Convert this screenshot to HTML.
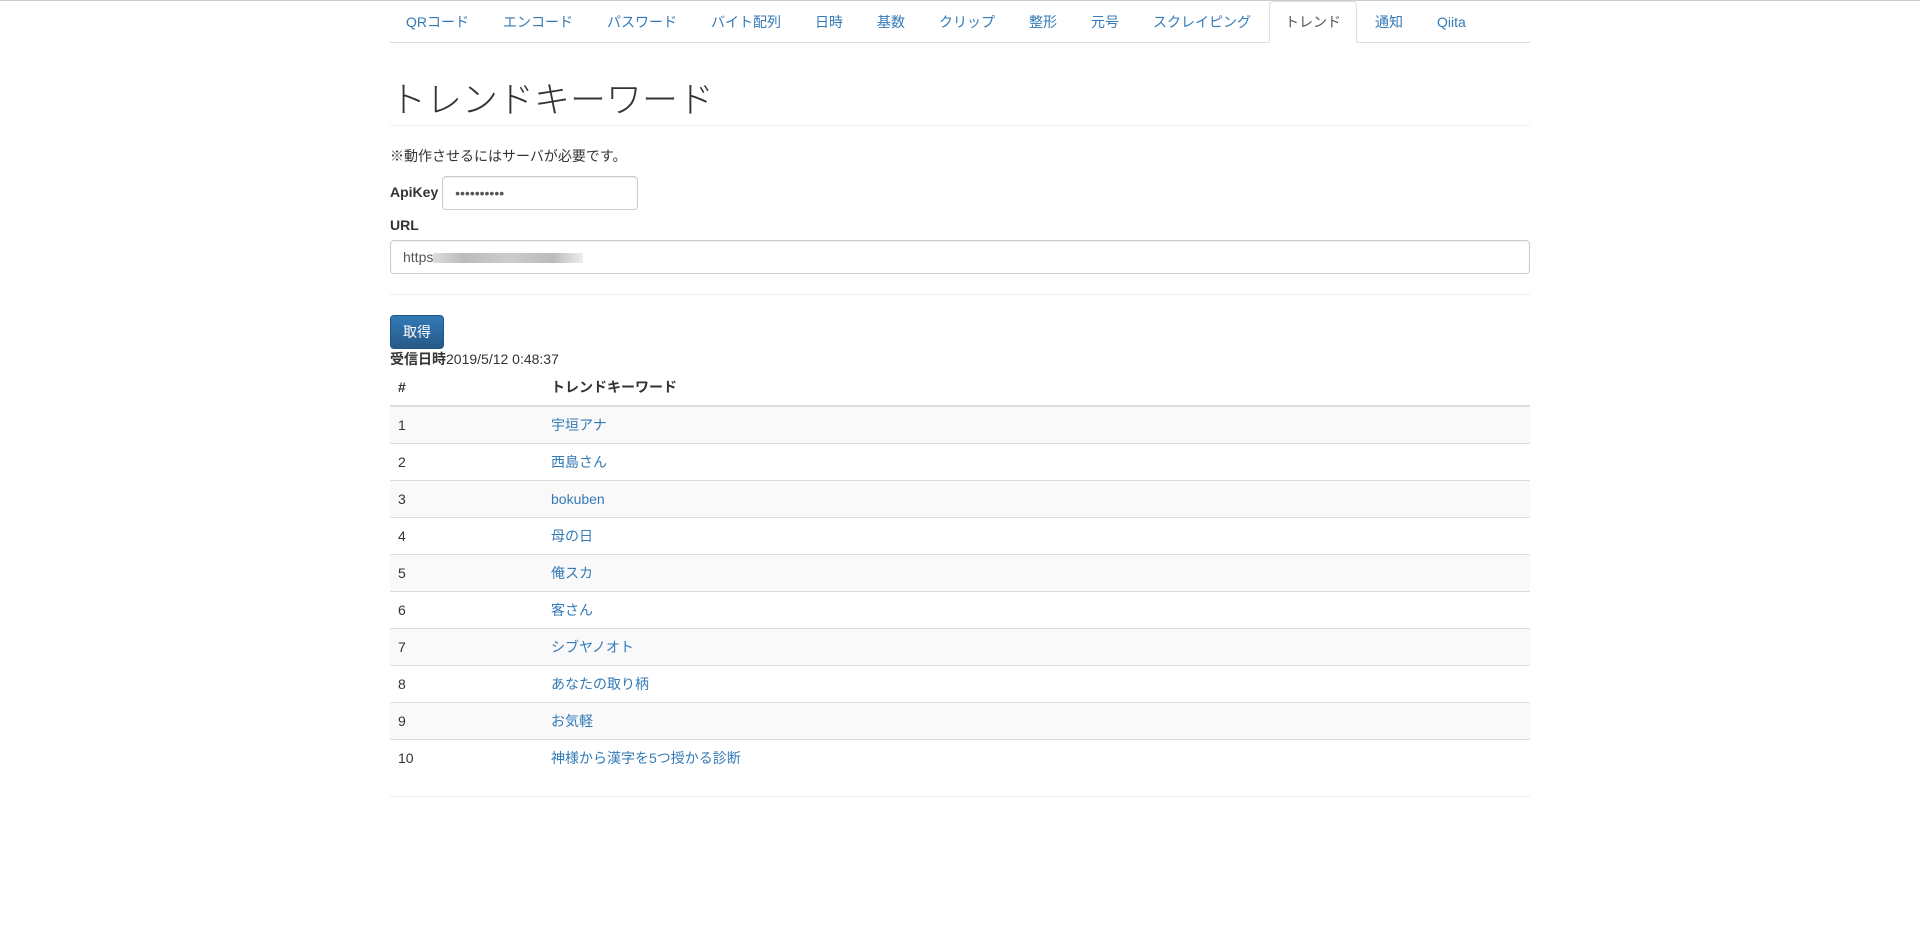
<!DOCTYPE html>
<html><head><meta charset="utf-8"><style>
*{box-sizing:border-box}
body{margin:0;font-family:"Liberation Sans","Noto Sans CJK JP",sans-serif;font-size:14px;line-height:20px;color:#333;background:#fff;border-top:1px solid #ccc}
.c{width:1140px;margin:0 auto}
.tabs{display:flex;border-bottom:1px solid #ddd;height:42px;margin:0;padding:0;list-style:none}
.tabs li{margin-bottom:-1px}
.tabs a{display:block;padding:10px 15px;margin-right:2px;color:#337ab7;text-decoration:none;border:1px solid transparent;border-radius:4px 4px 0 0;line-height:20px}
.tabs li.act a{color:#555;background:#fff;border-color:#ddd #ddd transparent}
.ph{margin:37px 0 20px;padding-bottom:5px;border-bottom:1px solid #eee}
h1{font-size:36px;font-weight:300;line-height:40px;margin:20px 0 0}
p{margin:0 0 10px}
label{font-weight:bold;display:inline-block;margin-bottom:5px}
.in{height:34px;border:1px solid #ccc;border-radius:4px;padding:6px 12px;box-shadow:inset 0 1px 1px rgba(0,0,0,.075);background:#fff;color:#555;font-size:14px}
hr{border:0;border-top:1px solid #eee;margin:20px 0}
.btn{display:inline-block;height:34px;padding:6px 12px;color:#fff;border-radius:4px;background:linear-gradient(#337ab7,#265a88);border:1px solid #245580}
table{width:100%;border-collapse:collapse;margin-bottom:20px}
th,td{padding:8px;text-align:left;line-height:20px;border-top:1px solid #ddd}
th{border-top:0;border-bottom:2px solid #ddd}
tbody tr:nth-child(odd){background:#f9f9f9}
td a{color:#337ab7;text-decoration:none}
.blur{display:inline-block;width:150px;height:10px;background:linear-gradient(90deg,#ddd,#bbb 20%,#ccc 50%,#bbb 80%,#eee);vertical-align:middle}
</style></head><body><div class="c">
<ul class="tabs">
<li><a>QRコード</a></li><li><a>エンコード</a></li><li><a>パスワード</a></li><li><a>バイト配列</a></li><li><a>日時</a></li><li><a>基数</a></li><li><a>クリップ</a></li><li><a>整形</a></li><li><a>元号</a></li><li><a>スクレイピング</a></li><li class="act"><a>トレンド</a></li><li><a>通知</a></li><li><a>Qiita</a></li>
</ul>
<div class="ph"><h1>トレンドキーワード</h1></div>
<p>※動作させるにはサーバが必要です。</p>
<div style="margin-bottom:5px"><label>ApiKey</label> <div class="in" style="display:inline-block;width:196px;vertical-align:middle">••••••••••</div></div>
<label>URL</label>
<div class="in" style="width:100%">https<span class="blur"></span></div>
<hr>
<div class="btn">取得</div>
<div><b>受信日時</b>2019/5/12 0:48:37</div>
<table><thead><tr><th style="width:153px">#</th><th>トレンドキーワード</th></tr></thead><tbody>
<tr><td>1</td><td><a>宇垣アナ</a></td></tr>
<tr><td>2</td><td><a>西島さん</a></td></tr>
<tr><td>3</td><td><a>bokuben</a></td></tr>
<tr><td>4</td><td><a>母の日</a></td></tr>
<tr><td>5</td><td><a>俺スカ</a></td></tr>
<tr><td>6</td><td><a>客さん</a></td></tr>
<tr><td>7</td><td><a>シブヤノオト</a></td></tr>
<tr><td>8</td><td><a>あなたの取り柄</a></td></tr>
<tr><td>9</td><td><a>お気軽</a></td></tr>
<tr><td>10</td><td><a>神様から漢字を5つ授かる診断</a></td></tr>
</tbody></table>
<hr>
</div></body></html>
